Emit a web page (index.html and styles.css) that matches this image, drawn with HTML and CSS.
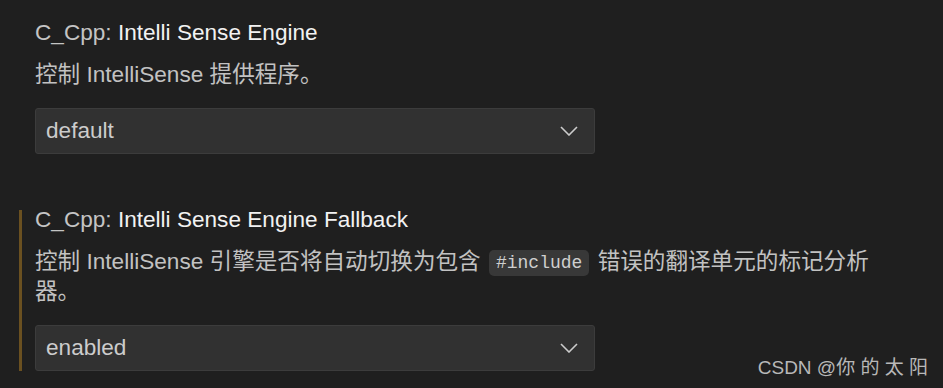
FILE: index.html
```html
<!DOCTYPE html>
<html lang="zh">
<head>
<meta charset="utf-8">
<link rel="stylesheet" href="styles.css">
</head>
<body>
<div class="page">
  <div class="setting">
    <div class="title"><span class="cat">C_Cpp: </span><span class="label">Intelli Sense Engine</span></div>
    <div class="desc">控制 IntelliSense 提供程序。</div>
    <div class="select"><span class="value">default</span>
      <svg class="chev" width="18" height="10" viewBox="0 0 18 10"><polyline points="1,1 9,9 17,1" fill="none" stroke="#cccccc" stroke-width="1.6"/></svg>
    </div>
  </div>
  <div class="setting modified">
    <div class="title"><span class="cat">C_Cpp: </span><span class="label">Intelli Sense Engine Fallback</span></div>
    <div class="desc">控制 IntelliSense 引擎是否将自动切换为包含 <code>#include</code> 错误的翻译单元的标记分析器。</div>
    <div class="select"><span class="value">enabled</span>
      <svg class="chev" width="18" height="10" viewBox="0 0 18 10"><polyline points="1,1 9,9 17,1" fill="none" stroke="#cccccc" stroke-width="1.6"/></svg>
    </div>
  </div>
</div>
<div class="watermark">CSDN @你 的 太 阳</div>
</body>
</html>
```
FILE: styles.css
```css
html, body {
  margin: 0;
  padding: 0;
  background: #1f1f1f;
  height: 100%;
  overflow: hidden;
}
body {
  font-family: "Liberation Sans", "Noto Sans CJK SC", sans-serif;
  font-size: 22.6px;
  color: #cccccc;
}
.page {
  padding-top: 23px;
  display: flex;
  flex-direction: column;
  gap: 56px;
}
.setting {
  margin-left: 19px;
  border-left: 3px solid transparent;
  padding-left: 13px;
}
.setting.modified {
  border-left-color: #6a5020;
}
.title {
  line-height: 20px;
  white-space: nowrap;
}
.cat {
  color: #c4c4c4;
}
.label {
  color: #f2f2f2;
}
.desc {
  margin-top: 17px;
  line-height: 30px;
  color: #c2c2c2;
  max-width: 850px;
}
code {
  display: inline-block;
  font-family: "Liberation Mono", monospace;
  font-size: 18px;
  line-height: 20px;
  background: #383838;
  color: #cfcfcf;
  border-radius: 5px;
  padding: 3px 7px;
  margin: 0 2px;
  vertical-align: 1px;
}
.select {
  margin-top: 18px;
  height: 44px;
  background: #313131;
  border: 1px solid #3c3c3c;
  border-radius: 3px;
  display: flex;
  align-items: center;
  justify-content: space-between;
  padding: 0 16px 0 10px;
  box-sizing: content-box;
  width: 532px;
}
.value {
  color: #cccccc;
}
.chev {
  display: block;
}
.watermark {
  position: absolute;
  right: 15px;
  bottom: 8px;
  font-size: 19px;
  color: #b8b8b8;
  line-height: 24px;
}
```
